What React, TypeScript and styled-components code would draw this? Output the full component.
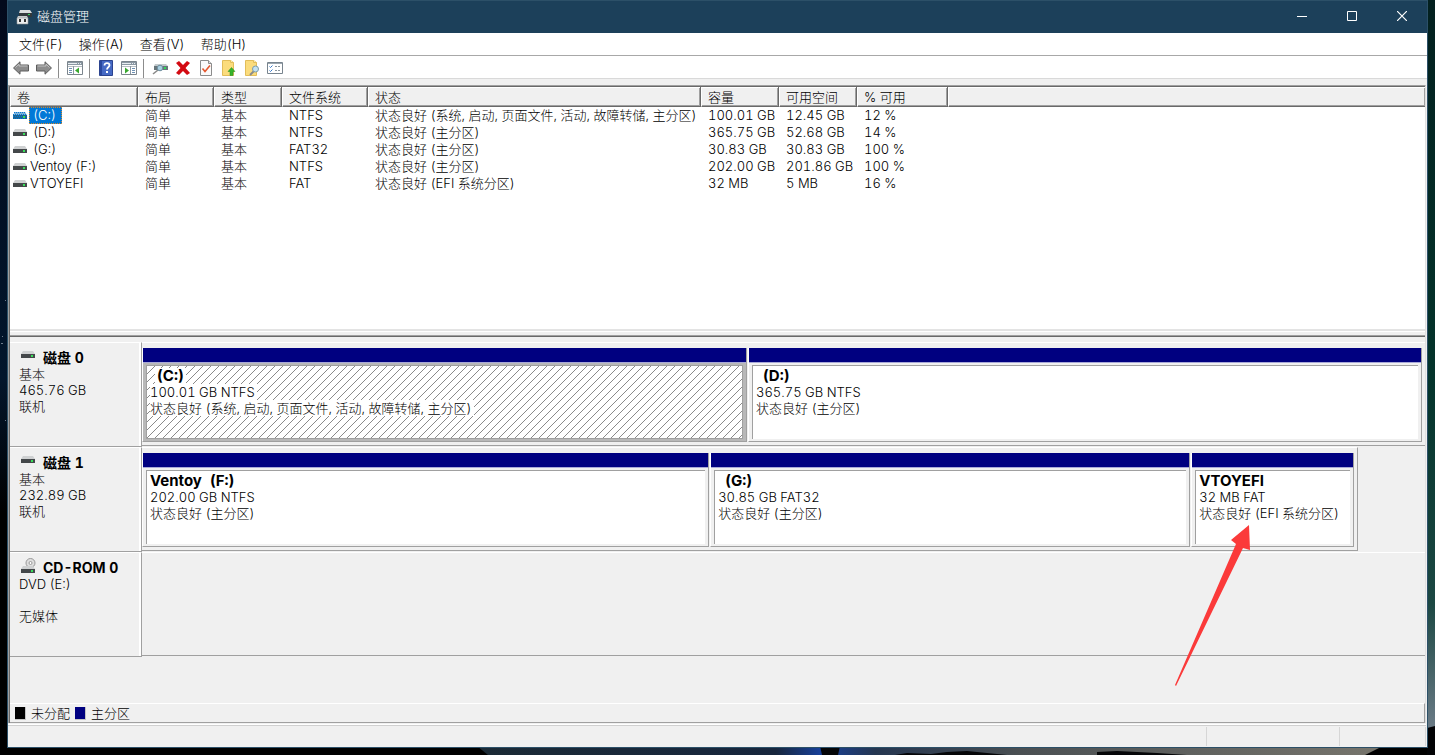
import React from "react";
import styled, { createGlobalStyle, css } from "styled-components";

const GlobalStyle = createGlobalStyle`
  *, *::before, *::after { box-sizing: border-box; }
  html, body { margin: 0; padding: 0; }
  body, button {
    font-family: Inter, "Noto Sans CJK SC", sans-serif;
    font-size: 13px;
    font-weight: 300;
    line-height: 16px;
    color: #000;
    font-variant-numeric: tabular-nums;
  }
  svg { display: block; }
`;

const colors = {
  title: "#1c405a",
  frame: "#2c5068",
  face: "#f0f0f0",
  shade: "#a0a0a0",
  dark: "#696969",
  navy: "#000080",
  select: "#0078d7",
};

const Desktop = styled.div`
  position: relative;
  display: flex;
  min-height: 100vh;
  padding: 0 7px 7px;
  background: linear-gradient(90deg, #020a18 0 50%, #04342a 50% 100%);
`;

const Wallpaper = styled.svg`
  position: absolute;
  inset: 0;
  width: 100%;
  height: 100%;
`;

const AppWindow = styled.div`
  position: relative;
  display: flex;
  flex: 1;
  min-width: 0;
  flex-direction: column;
  border: 1px solid ${colors.frame};
  background: ${colors.face};
`;

const TitleBar = styled.header`
  display: flex;
  height: 32px;
  align-items: center;
  padding-left: 8px;
  background: ${colors.title};
  color: #fff;
`;

const Title = styled.h1`
  flex: 1;
  margin: 0 0 2px 5px;
  font-size: 13px;
  font-weight: 300;
`;

const CaptionButton = styled.button`
  display: flex;
  width: 50px;
  height: 32px;
  align-items: center;
  justify-content: center;
  padding: 0 0 2px;
  border: 0;
  background: none;
  color: #fff;
`;

const MenuBar = styled.nav`
  display: flex;
  height: 23px;
  align-items: center;
  padding-left: 3px;
  border-bottom: 1px solid #a8a8a8;
  background: #fff;
`;

const MenuButton = styled.button`
  padding: 0 8px;
  border: 0;
  background: none;
`;

const Toolbar = styled.div`
  display: flex;
  height: 23px;
  align-items: center;
  padding: 2px 0 0 1px;
  border-bottom: 1px solid #d9d9d9;
  background: #fff;
`;

const ToolButton = styled.button`
  display: flex;
  width: 23px;
  height: 20px;
  align-items: center;
  justify-content: center;
  padding: 0;
  border: 0;
  background: none;
`;

const ToolDivider = styled.span`
  width: 1px;
  height: 19px;
  margin: 0 4px 0 3px;
  background: #8c8c8c;
`;

const Content = styled.main`
  display: flex;
  flex: 1;
  flex-direction: column;
  margin: 6px 1px 2px 0;
  border: 1px solid ${colors.shade};
  border-right-color: #e0e0e0;
  border-bottom: 0;
`;

const Inner = styled.div`
  display: flex;
  flex: 1;
  flex-direction: column;
  border: 1px solid ${colors.dark};
  border-right: 0;
  border-bottom: 0;
`;

const VolumePane = styled.section`
  min-height: 242px;
  background: #fff;
`;

const VolumeTable = styled.table`
  width: 100%;
  table-layout: fixed;
  border-collapse: separate;
  border-spacing: 0;
`;

const HeadCell = styled.th<{ $width?: number }>`
  width: ${(p) => (p.$width ? `${p.$width}px` : "auto")};
  height: 20px;
  padding: 0 0 0 6px;
  border-right: ${(p) => (p.$width ? `1px solid ${colors.dark}` : 0)};
  border-bottom: 1px solid ${colors.dark};
  border-left: 1px solid #fff;
  background: ${colors.face};
  box-shadow: inset 0 1px #fff, inset -1px -1px ${colors.shade};
  font-weight: 300;
  text-align: left;
  white-space: nowrap;
`;

const Cell = styled.td`
  height: 17px;
  padding: 0 0 0 7px;
  line-height: 17px;
  white-space: nowrap;
`;

const NameCell = styled(Cell)`
  padding-left: 3px;
`;

const VolumeName = styled.span<{ $unnamed?: boolean; $selected?: boolean }>`
  display: inline-block;
  margin-left: 2px;
  padding: 0 6px 0 ${(p) => (p.$unnamed ? 4 : 1)}px;
  ${(p) =>
    p.$selected &&
    css`
      background: ${colors.select};
      color: #fff;
      outline: 1px dotted #d98a2b;
      outline-offset: -1px;
    `}
`;

const InlineIcon = styled.span`
  display: inline-block;
  vertical-align: middle;
`;

const Splitter = styled.div`
  height: 8px;
  border-top: 2px solid #e3e3e3;
  border-bottom: 1px solid ${colors.dark};
  background: ${colors.face};
  box-shadow: inset 0 1px #fff, inset 0 -1px ${colors.shade};
`;

const DiskPane = styled.section`
  flex: 1;
  padding-top: 5px;
`;

const DiskRow = styled.div`
  display: flex;
  min-height: 105px;
`;

const DiskLabel = styled.div`
  width: 132px;
  padding: 7px 0 0 9px;
  border-top: 1px solid #fff;
  border-right: 1px solid ${colors.shade};
  border-bottom: 1px solid ${colors.shade};
  box-shadow: inset -2px 0 #fff;
`;

const DiskName = styled.h2`
  display: flex;
  height: 16px;
  gap: 8px;
  margin: 0 0 0 2px;
  font-size: 14px;
  font-weight: 700;
  line-height: 16px;
`;

const Line = styled.p`
  min-height: 16px;
  margin: 0;
  white-space: nowrap;
`;

const DiskTrack = styled.div<{ $width?: string }>`
  flex: 1;
  min-width: 0;
`;

const DiskMap = styled.div<{ $columns: string; $width?: string }>`
  display: grid;
  width: ${(p) => p.$width ?? "100%"};
  height: 104px;
  grid-template-columns: ${(p) => p.$columns};
  column-gap: 1px;
  padding: 5px 3px 3px 0;
  border-top: 1px solid #fff;
  border-right: ${(p) => (p.$width ? `1px solid ${colors.shade}` : 0)};
  border-bottom: 1px solid ${colors.shade};
`;

const Partition = styled.article`
  position: relative;
  display: flex;
  min-width: 0;
  flex-direction: column;
  border: 1px solid ${colors.shade};
  border-top: 0;
  border-left-color: #fff;
`;

const Stripe = styled.div`
  height: 15px;
  border-bottom: 1px solid #a9a9d8;
  background: ${colors.navy};
`;

const PartitionFrame = styled.div<{ $selected?: boolean }>`
  display: flex;
  flex: 1;
  padding: 2px 3px;
  background: ${(p) => (p.$selected ? "#b8b8b8" : colors.face)};
`;

const PartitionBody = styled.div<{ $selected?: boolean }>`
  flex: 1;
  min-width: 0;
  padding: 2px 0 0 3px;
  border-top: 1px solid ${colors.shade};
  border-left: 1px solid ${colors.shade};
  background-color: #fff;
  ${(p) =>
    p.$selected &&
    css`
      border: 1px solid ${colors.shade};
      background-image: linear-gradient(135deg, transparent 46%, #8a8a8a 48% 52%, transparent 54%);
      background-size: 8px 8px;
    `}
`;

const PartitionLine = styled.p`
  width: fit-content;
  margin: 0;
  padding-right: 2px;
  background: #fff;
  white-space: nowrap;
`;

const PartitionName = styled.h3<{ $unnamed?: boolean }>`
  width: fit-content;
  margin: 0 0 0 ${(p) => (p.$unnamed ? 5 : 0)}px;
  padding: 0 2px 0 ${(p) => (p.$unnamed ? 2 : 0)}px;
  background: #fff;
  font-size: 15px;
  font-weight: 700;
  line-height: 16px;
  white-space: pre;
`;

const ArrowMark = styled.svg`
  position: absolute;
  top: 72px;
  left: -18px;
`;

const Legend = styled.footer`
  display: flex;
  height: 20px;
  align-items: center;
  gap: 5px;
  padding-left: 5px;
  border: 1px solid ${colors.shade};
  border-top-color: #fff;
  border-left: 0;
`;

const Swatch = styled.span<{ $color: string }>`
  width: 11px;
  height: 13px;
  border: 1px solid #c4c4c4;
  border-top-width: 0;
  border-left-width: 0;
  background: ${(p) => p.$color};
`;

const StatusBar = styled.div`
  display: grid;
  height: 22px;
  grid-template-columns: 1fr 133px 86px;
  margin-right: 1px;
  border-top: 1px solid #d0d0d0;
  box-shadow: 0 -1px #fff;
`;

const StatusCell = styled.span`
  margin: 1px 0;
  border-right: 1px solid #d6d6d6;
`;

function DriveIcon({ selected = false, disc = false }) {
  return (
    <svg width="14" height={disc ? 14 : 10} viewBox={disc ? "0 -5 14 14" : "0 0 14 10"} overflow="visible" aria-hidden="true">
      {disc && (
        <>
          <circle cx="9.5" cy="-2" r="4.5" fill="#dedede" stroke="#999" />
          <circle cx="9.5" cy="-2" r="1.5" fill="#fff" stroke="#999" />
        </>
      )}
      <path d="M2 1h10l2 3H0z" fill={selected ? "#7fb2d8" : "#cfd1d2"} />
      <path d="M0 4h14v4H0z" fill={selected ? "#1d6390" : "#44484a"} />
      <path d="M10 5h2v2h-2z" fill="#38e05a" />
      {selected && <path d="M1 1.500h12M0 3.500h14M0 5.500h10M1 7.500h12" stroke="#0078d7" strokeDasharray="1 1" />}
    </svg>
  );
}

function DiskManagerIcon() {
  return (
    <svg width="16" height="16" viewBox="0 0 16 16" aria-hidden="true">
      <path d="M4 1h10l2 3v4H3V4z" fill="#d9dcdd" />
      <path d="M3 4h13v4H3z" fill="#34393c" />
      <path d="M12 5h2v1h-2z" fill="#35d657" />
      <path d="M2 7h9l1 2v6H1V9z" fill="#c7cbcd" />
      <path d="M1 9h11v6H1z" fill="#eceeef" stroke="#999" strokeWidth=".6" />
      <path d="M3 10h2v3H3zM8 10h2v3H8z" fill="#333" />
    </svg>
  );
}

function ArrowIcon({ flip = false }) {
  return (
    <svg width="18" height="16" viewBox="0 0 18 16" aria-hidden="true">
      <g transform={flip ? "translate(18 0) scale(-1 1)" : undefined}>
        <path d="M1.5 8 8 1.8V5h8.5v6H8v3.2z" fill="#8d8d8d" stroke="#5c5c5c" />
        <path d="M3.5 7.5 7 4.2V6h8.5" fill="none" stroke="#c2c2c2" />
      </g>
    </svg>
  );
}

function PaneIcon({ right = false }) {
  return (
    <svg width="16" height="14" viewBox="0 0 16 14" aria-hidden="true">
      <path d="M.5.5h15v13H.5z" fill="#fff" stroke="#7b858d" />
      <path d="M1 1h14v3H1z" fill="#8b98a3" />
      <path d="M1 2.500h9M11 2.500h1M13 2.500h1" stroke="#e8edf0" />
      <path d="M1 5.500h14" stroke="#b6bdc2" />
      {right ? (
        <>
          <path d="M9.500 5v8" stroke="#8b98a3" />
          <path d="M11 7.500h3M11 9.500h3M11 11.500h3" stroke="#6d8fb3" />
          <path d="m4 6.500 4 3-4 3z" fill="#38a82f" />
        </>
      ) : (
        <>
          <path d="M6.500 5v8" stroke="#8b98a3" />
          <path d="M2 7.500h3M2 9.500h3M2 11.500h3" stroke="#6d8fb3" />
          <path d="m12 6.500-4 3 4 3z" fill="#38a82f" />
        </>
      )}
    </svg>
  );
}

function HelpIcon() {
  return (
    <svg width="14" height="16" viewBox="0 0 14 16" aria-hidden="true">
      <path d="M.5.500h13v15H.5z" fill="#4569c4" stroke="#2b438f" />
      <path d="M1 1h2v14H1z" fill="#29479f" />
      <path d="M5.500 5.500c0-3.500 5-3 5-.2 0 2-2.500 2-2.500 4.200" fill="none" stroke="#fff" strokeWidth="1.800" />
      <path d="M7 11h2v2H7z" fill="#fff" />
    </svg>
  );
}

function DriveSearchIcon() {
  return (
    <svg width="16" height="14" viewBox="0 0 16 14" aria-hidden="true">
      <path d="M3 3h11l2 2H2z" fill="#c3cacd" />
      <path d="M2 5h14v4H2z" fill="#67757a" />
      <path d="M12 6h2v2h-2z" fill="#2fdb56" />
      <path d="m1 13 5-4" stroke="#8a8a8a" strokeWidth="1.600" />
      <circle cx="8" cy="7" r="2.800" fill="#a9d0e2" stroke="#6d8c9c" />
    </svg>
  );
}

function DeleteIcon() {
  return (
    <svg width="16" height="14" viewBox="0 0 16 14" aria-hidden="true">
      <path d="m1 2 3-2 4 4 4-4 3 2-4.500 5L15 12l-3 2-4-4-4 4-3-2 4.500-5z" fill="#d30a12" />
    </svg>
  );
}

function CheckDocIcon() {
  return (
    <svg width="14" height="16" viewBox="0 0 14 16" aria-hidden="true">
      <path d="M1.500.5h8l3 3v12h-11z" fill="#fafafa" stroke="#8c8c8c" />
      <path d="M9.500.5v3h3" fill="#ddd" stroke="#8c8c8c" />
      <path d="m3.500 8.500 2.500 3 5-6" fill="none" stroke="#e4572e" strokeWidth="1.600" />
    </svg>
  );
}

function FolderIcon({ search = false }) {
  return (
    <svg width="16" height="16" viewBox="0 0 16 16" aria-hidden="true">
      <path d="M1.500.5h8l3 2v13h-11z" fill="#fbdc7c" stroke="#e2bd59" />
      <path d="M9.500.5v2h3" fill="#fff1b8" stroke="#e2bd59" />
      {search ? (
        <>
          <path d="m6 15 4-4" stroke="#8b8b8b" strokeWidth="2" />
          <circle cx="11.500" cy="9" r="3" fill="#c3e2f1" stroke="#7c9cab" />
        </>
      ) : (
        <path d="m10.500 7.500 3.500 4h-2v4H9v-4H7z" fill="#36b52b" stroke="#258c1d" strokeWidth=".5" />
      )}
    </svg>
  );
}

function ChecklistIcon() {
  return (
    <svg width="16" height="12" viewBox="0 0 16 12" aria-hidden="true">
      <path d="M.5.5h15v11H.5z" fill="#fff" stroke="#78848e" />
      <path d="M1 1.500h14" stroke="#9aa6af" />
      <path d="m2.500 4.500 1 1 2-2M2.500 8.500l1 1 2-2" fill="none" stroke="#3677c9" />
      <path d="M8 4.500h2M11 4.500h2M8 8.500h2M11 8.500h2" stroke="#8a949c" />
    </svg>
  );
}

const columns: { label: string; width?: number }[] = [
  { label: "卷", width: 128 },
  { label: "布局", width: 76 },
  { label: "类型", width: 68 },
  { label: "文件系统", width: 86 },
  { label: "状态", width: 333 },
  { label: "容量", width: 78 },
  { label: "可用空间", width: 78 },
  { label: "% 可用", width: 91 },
  { label: "" },
];

const volumes = [
  { name: "(C:)", fs: "NTFS", status: "状态良好 (系统, 启动, 页面文件, 活动, 故障转储, 主分区)", size: "100.01 GB", free: "12.45 GB", pct: "12 %", selected: true },
  { name: "(D:)", fs: "NTFS", status: "状态良好 (主分区)", size: "365.75 GB", free: "52.68 GB", pct: "14 %" },
  { name: "(G:)", fs: "FAT32", status: "状态良好 (主分区)", size: "30.83 GB", free: "30.83 GB", pct: "100 %" },
  { name: "Ventoy (F:)", fs: "NTFS", status: "状态良好 (主分区)", size: "202.00 GB", free: "201.86 GB", pct: "100 %" },
  { name: "VTOYEFI", fs: "FAT", status: "状态良好 (EFI 系统分区)", size: "32 MB", free: "5 MB", pct: "16 %" },
];

type PartitionData = { name: string; size: string; status: string; weight: number; selected?: boolean; marked?: boolean };
type DiskData = { name: string; lines: string[]; disc?: boolean; width?: string; partitions: PartitionData[] };

const disks: DiskData[] = [
  {
    name: "磁盘 0",
    lines: ["基本", "465.76 GB", "联机"],
    partitions: [
      { name: "(C:)", size: "100.01 GB NTFS", status: "状态良好 (系统, 启动, 页面文件, 活动, 故障转储, 主分区)", weight: 605, selected: true },
      { name: "(D:)", size: "365.75 GB NTFS", status: "状态良好 (主分区)", weight: 674 },
    ],
  },
  {
    name: "磁盘 1",
    lines: ["基本", "232.89 GB", "联机"],
    width: "94.8%",
    partitions: [
      { name: "Ventoy  (F:)", size: "202.00 GB NTFS", status: "状态良好 (主分区)", weight: 567 },
      { name: "(G:)", size: "30.85 GB FAT32", status: "状态良好 (主分区)", weight: 480 },
      { name: "VTOYEFI", size: "32 MB FAT", status: "状态良好 (EFI 系统分区)", weight: 163, marked: true },
    ],
  },
  { name: "CD-ROM 0", lines: ["DVD (E:)", "", "无媒体"], disc: true, partitions: [] },
];

function Disk({ disk }: { disk: DiskData }) {
  return (
    <DiskRow>
      <DiskLabel>
        <DiskName>
          <DriveIcon disc={disk.disc} />
          {disk.name}
        </DiskName>
        {disk.lines.map((line, i) => (
          <Line key={i}>{line}</Line>
        ))}
      </DiskLabel>
      <DiskTrack>
        <DiskMap $width={disk.width} $columns={disk.partitions.map((p) => `minmax(0, ${p.weight}fr)`).join(" ") || "1fr"}>
          {disk.partitions.map((p) => (
            <Partition key={p.name}>
              <Stripe />
              <PartitionFrame $selected={p.selected}>
                <PartitionBody $selected={p.selected}>
                  <PartitionName $unnamed={p.name.startsWith("(")}>{p.name}</PartitionName>
                  <PartitionLine>{p.size}</PartitionLine>
                  <PartitionLine>{p.status}</PartitionLine>
                </PartitionBody>
              </PartitionFrame>
              {p.marked && (
                <ArrowMark width="78" height="163" viewBox="0 0 78 163" aria-hidden="true">
                  <path d="M75 0 57 15l5 4L1 160l1 1 67-138 7 2z" fill="#fb3a3a" />
                </ArrowMark>
              )}
            </Partition>
          ))}
        </DiskMap>
      </DiskTrack>
    </DiskRow>
  );
}

export default function App() {
  return (
    <>
      <GlobalStyle />
      <Desktop>
        <Wallpaper viewBox="0 0 1435 755" preserveAspectRatio="none" aria-hidden="true">
          <defs>
            <linearGradient id="leftSky" x1="0" y1="0" x2="0" y2="1">
              <stop offset="0" stopColor="#030a1c" />
              <stop offset=".5" stopColor="#03162c" />
              <stop offset=".68" stopColor="#000" />
            </linearGradient>
            <linearGradient id="rightSky" x1="0" y1="0" x2="0" y2="1">
              <stop offset="0" stopColor="#03201f" />
              <stop offset=".5" stopColor="#04342b" />
              <stop offset=".8" stopColor="#1c4843" />
              <stop offset=".97" stopColor="#6d7c88" />
            </linearGradient>
            <linearGradient id="horizon" x1="0" y1="0" x2="1" y2="0">
              <stop offset="0" stopColor="#1b2a35" />
              <stop offset=".33" stopColor="#17263d" />
              <stop offset=".38" stopColor="#17409a" />
              <stop offset=".44" stopColor="#253650" />
              <stop offset=".6" stopColor="#4a4f52" />
              <stop offset="1" stopColor="#77756c" />
            </linearGradient>
          </defs>
          <path d="M0 0h20v755H0z" fill="url(#leftSky)" />
          <path d="M1415 0h20v755h-20z" fill="url(#rightSky)" />
          <path d="M0 745h1435v10H0z" fill="#000" />
          <path d="M477 746h906l-18 9H488z" fill="url(#horizon)" />
          <path d="M820 746h20l-2 9h-16zM895 755l12-2 24 1 16-2 20-1 20 2 20 2zM1097 752l20-1 40 2 30 2h-90z" fill="#050608" />
          <path d="M1427 728l8-2v29h-8z" fill="#020305" />
          <path d="M2 336h1v1H2zM5 300h1v1H5zM1 343h2v1H1zM5 420h1v1H5z" fill="#6e7c8c" />
        </Wallpaper>
        <AppWindow>
          <TitleBar>
            <DiskManagerIcon />
            <Title>磁盘管理</Title>
            <CaptionButton aria-label="最小化">
              <svg width="10" height="10" viewBox="0 0 10 10"><path d="M0 5.500h10" stroke="currentColor" /></svg>
            </CaptionButton>
            <CaptionButton aria-label="最大化">
              <svg width="10" height="10" viewBox="0 0 10 10"><path d="M.5.5h9v9h-9z" fill="none" stroke="currentColor" /></svg>
            </CaptionButton>
            <CaptionButton aria-label="关闭">
              <svg width="10" height="10" viewBox="0 0 10 10"><path d="m0 0 10 10M10 0 0 10" stroke="currentColor" strokeWidth="1.200" /></svg>
            </CaptionButton>
          </TitleBar>
          <MenuBar>
            <MenuButton>文件(F)</MenuButton>
            <MenuButton>操作(A)</MenuButton>
            <MenuButton>查看(V)</MenuButton>
            <MenuButton>帮助(H)</MenuButton>
          </MenuBar>
          <Toolbar>
            <ToolButton aria-label="后退"><ArrowIcon /></ToolButton>
            <ToolButton aria-label="前进"><ArrowIcon flip /></ToolButton>
            <ToolDivider />
            <ToolButton aria-label="显示/隐藏控制台树"><PaneIcon /></ToolButton>
            <ToolDivider />
            <ToolButton aria-label="帮助"><HelpIcon /></ToolButton>
            <ToolButton aria-label="显示/隐藏操作窗格"><PaneIcon right /></ToolButton>
            <ToolDivider />
            <ToolButton aria-label="重新扫描"><DriveSearchIcon /></ToolButton>
            <ToolButton aria-label="删除"><DeleteIcon /></ToolButton>
            <ToolButton aria-label="属性"><CheckDocIcon /></ToolButton>
            <ToolButton aria-label="打开"><FolderIcon /></ToolButton>
            <ToolButton aria-label="浏览"><FolderIcon search /></ToolButton>
            <ToolButton aria-label="设置"><ChecklistIcon /></ToolButton>
          </Toolbar>
          <Content>
            <Inner>
              <VolumePane>
                <VolumeTable>
                  <thead>
                    <tr>
                      {columns.map((c) => (
                        <HeadCell key={c.label} $width={c.width}>{c.label}</HeadCell>
                      ))}
                    </tr>
                  </thead>
                  <tbody>
                    {volumes.map((v) => (
                      <tr key={v.name}>
                        <NameCell>
                          <InlineIcon><DriveIcon selected={v.selected} /></InlineIcon>
                          <VolumeName $selected={v.selected} $unnamed={v.name.startsWith("(")}>{v.name}</VolumeName>
                        </NameCell>
                        <Cell>简单</Cell>
                        <Cell>基本</Cell>
                        <Cell>{v.fs}</Cell>
                        <Cell>{v.status}</Cell>
                        <Cell>{v.size}</Cell>
                        <Cell>{v.free}</Cell>
                        <Cell>{v.pct}</Cell>
                        <Cell />
                      </tr>
                    ))}
                  </tbody>
                </VolumeTable>
              </VolumePane>
              <Splitter />
              <DiskPane>
                {disks.map((d) => (
                  <Disk key={d.name} disk={d} />
                ))}
              </DiskPane>
              <Legend>
                <Swatch $color="#000" />
                未分配
                <Swatch $color={colors.navy} />
                主分区
              </Legend>
            </Inner>
          </Content>
          <StatusBar>
            <StatusCell />
            <StatusCell />
            <StatusCell />
          </StatusBar>
        </AppWindow>
      </Desktop>
    </>
  );
}
